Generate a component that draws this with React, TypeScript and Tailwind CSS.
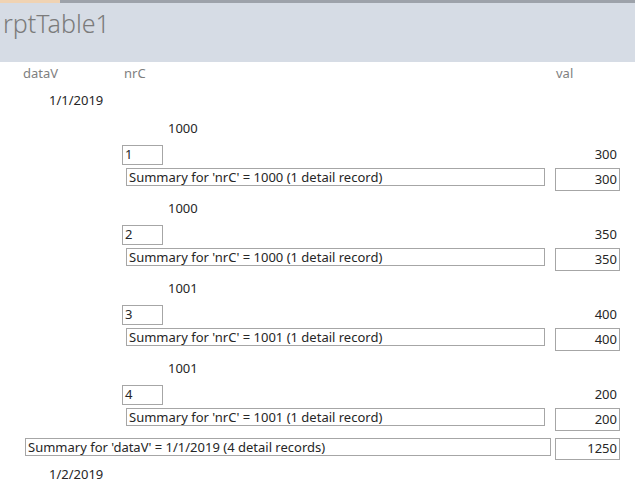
import React from "react";

const groups = [
  { nr: "1000", id: "1", val: "300" },
  { nr: "1000", id: "2", val: "350" },
  { nr: "1001", id: "3", val: "400" },
  { nr: "1001", id: "4", val: "200" },
];

export default function App() {
  return (
    <div
      className="w-[635px] h-[489px] bg-white overflow-hidden text-[13px] text-[#262626]"
      style={{ fontFamily: '"Noto Sans", "Open Sans", sans-serif' }}
    >
      <div className="h-[62px] bg-[#d6dce5] flex flex-col">
        <div className="flex h-[3px]">
          <div className="w-[60px] bg-[#f0d3b3]" />
          <div className="flex-1 bg-[#9da2aa]" />
        </div>
        <div className="pl-[3px] pt-[4px] text-[25px] leading-[32px] font-light text-[#7b7b7b]">
          rptTable1
        </div>
      </div>
      <div className="h-[24px] flex items-center text-[#7f7f7f] relative">
        <span className="pl-[23px] w-[124px]">dataV</span>
        <span className="flex-1">nrC</span>
        <span className="w-[79px]">val</span>
      </div>
      <div className="h-[20px] mt-[5px] flex items-center pl-[49px]">1/1/2019</div>
      <div className="pt-[8px] flex flex-col">
        {groups.map((g, i) => (
          <div key={i} className="h-[80px] flex flex-col">
            <div className="h-[20px] flex items-center pl-[168px]">{g.nr}</div>
            <div className="mt-[6px] h-[20px] flex items-center">
              <div className="ml-[122px] w-[41px] h-[20px] border border-[#a6a6a6] flex items-center pl-[2px]">
                {g.id}
              </div>
              <div className="flex-1" />
              <div className="pr-[18px]">{g.val}</div>
            </div>
            <div className="mt-[3px] flex items-start">
              <div className="ml-[126px] w-[419px] h-[18px] border border-[#a6a6a6] flex items-center pl-[2px] pt-[1px] leading-none">
                Summary for 'nrC' = {g.nr} (1 detail record)
              </div>
              <div className="ml-[10px] w-[65px] h-[23px] border border-[#a6a6a6] flex items-center justify-end pr-[2px]">
                {g.val}
              </div>
            </div>
          </div>
        ))}
      </div>
      <div className="-mt-[1px] flex items-start">
        <div className="ml-[25px] w-[526px] h-[18px] border border-[#a6a6a6] flex items-center pl-[2px] pt-[1px] leading-none">
          Summary for 'dataV' = 1/1/2019 (4 detail records)
        </div>
        <div className="ml-[4px] w-[65px] h-[22px] border border-[#a6a6a6] flex items-center justify-end pr-[2px]">
          1250
        </div>
      </div>
      <div className="h-[20px] mt-[5px] flex items-center pl-[49px]">1/2/2019</div>
    </div>
  );
}
